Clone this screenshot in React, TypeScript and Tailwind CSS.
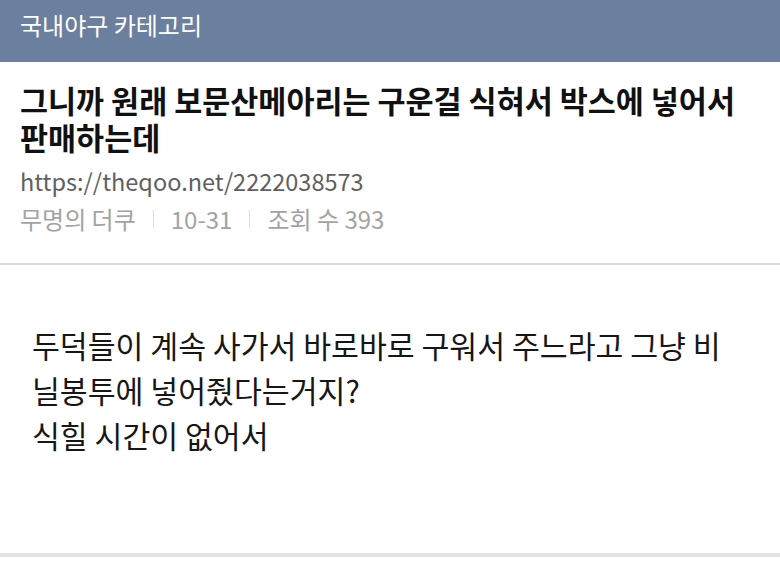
import React from "react";

const font = {
  fontFamily: '"Noto Sans CJK KR", "Noto Sans", sans-serif',
};

function Header({ title }: { title: string }) {
  return (
    <div className="h-[62px] bg-[#6b809e] px-[20px] pt-[7px]">
      <p className="text-[24px] leading-[36px] text-white">{title}</p>
    </div>
  );
}

function Meta({ items }: { items: string[] }) {
  return (
    <div className="flex items-center text-[24px] leading-[30px] text-[#a3a3a3]">
      {items.map((item, i) => (
        <React.Fragment key={item}>
          {i > 0 && <span className="mx-[17px] h-[18px] w-px bg-[#dedede]" />}
          <span>{item}</span>
        </React.Fragment>
      ))}
    </div>
  );
}

export default function App() {
  return (
    <div className="w-[780px] h-[561px] overflow-hidden bg-white" style={font}>
      <Header title="국내야구 카테고리" />

      {/* post heading */}
      <div className="pl-[20px] pr-[40px] pt-[20px] pb-[29px] border-b-2 border-[#dcdcdc]">
        <h1 className="text-[30.5px] font-bold leading-[37px] text-[#111]">
          그니까 원래 보문산메아리는 구운걸 식혀서 박스에 넣어서 판매하는데
        </h1>
        <p className="mt-[10px] text-[23.5px] leading-[30px] text-[#5f5f5f]">
          https://theqoo.net/2222038573
        </p>
        <div className="mt-[8px]">
          <Meta items={["무명의 더쿠", "10-31", "조회 수 393"]} />
        </div>
      </div>

      {/* post body */}
      <div className="h-[292px] pl-[32px] pr-[50px] pt-[58px] border-b-4 border-[#e2e2e2]">
        <p className="text-[30.3px] leading-[45px] text-[#161616]">
          두덕들이 계속 사가서 바로바로 구워서 주느라고 그냥 비닐봉투에
          넣어줬다는거지?
          <br />
          식힐 시간이 없어서
        </p>
      </div>
    </div>
  );
}
